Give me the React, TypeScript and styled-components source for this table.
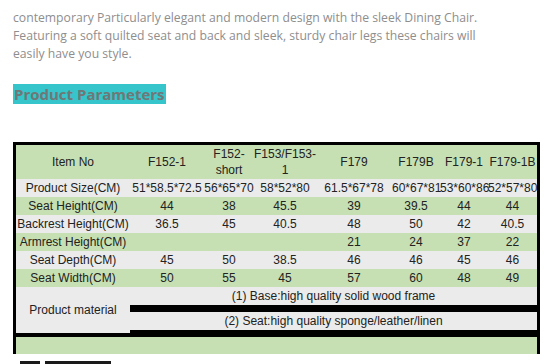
import styled, { createGlobalStyle } from "styled-components";

const GlobalStyle = createGlobalStyle`
  body {
    margin: 0;
    background: #ffffff;
  }
`;

const GREEN = "#c6e0b4";
const GREY = "#ebebeb";
const COLS = "114px 74px 50px 62px 76px 48px 48px 49px";

const Page = styled.div`
  padding: 9px 0 0 13px;
  width: 545px;
  box-sizing: border-box;
`;

const Intro = styled.p`
  margin: 0;
  font-family: "Open Sans", "DejaVu Sans", sans-serif;
  font-size: 12.2px;
  line-height: 18px;
  color: #8e8e8e;
`;

const SectionTitle = styled.h2`
  display: inline-block;
  margin: 21px 0 0;
  padding: 0 1px;
  height: 20px;
  line-height: 20px;
  background: #36c5ca;
  color: #6f7777;
  font-family: "Open Sans", "DejaVu Sans", sans-serif;
  font-size: 15px;
  font-weight: 700;
`;

const Table = styled.div`
  margin-top: 38px;
  width: 527px;
  box-sizing: border-box;
  border: 3px solid #000;
  border-bottom: none;
  font-family: "Liberation Sans", Arial, sans-serif;
  font-size: 12px;
  color: #222222;
`;

const Row = styled.div<{ $bg: string; $h: number }>`
  display: grid;
  grid-template-columns: ${COLS};
  height: ${(p) => p.$h}px;
  background: ${(p) => p.$bg};
`;

const Cell = styled.div`
  display: flex;
  align-items: center;
  justify-content: center;
  min-width: 0;
  white-space: nowrap;
`;

const CellText = styled.span`
  display: block;
  width: 100%;
  text-align: center;
  line-height: 16px;
`;

const Material = styled.div`
  display: grid;
  grid-template-columns: 114px 1fr;
  height: 50px;
`;

const MaterialLabel = styled.div`
  background: ${GREY};
  border-bottom: 4px solid #000;
  display: flex;
  align-items: center;
  justify-content: center;
`;

const MaterialList = styled.div`
  display: flex;
  flex-direction: column;
`;

const MaterialLine = styled.div`
  height: 18px;
  line-height: 18px;
  background: ${GREY};
  text-align: center;
  border-bottom: 7px solid #000;
`;

const BottomBand = styled.div`
  height: 17px;
  background: ${GREEN};
`;

const NextHeading = styled.div`
  margin: 7px 0 0 7px;
  display: flex;
  gap: 5px;
`;

const HeadingPiece = styled.div<{ $w: number }>`
  width: ${(p) => p.$w}px;
  height: 12px;
  background: #1a1a1a;
`;

const header = ["Item No", "F152-1", "F152-\nshort", "F153/F153-\n1", "F179", "F179B", "F179-1", "F179-1B"];

const rows: { label: string; values: string[] }[] = [
  { label: "Product Size(CM)", values: ["51*58.5*72.5", "56*65*70", "58*52*80", "61.5*67*78", "60*67*81", "53*60*86", "52*57*80"] },
  { label: "Seat Height(CM)", values: ["44", "38", "45.5", "39", "39.5", "44", "44"] },
  { label: "Backrest Height(CM)", values: ["36.5", "45", "40.5", "48", "50", "42", "40.5"] },
  { label: "Armrest Height(CM)", values: ["", "", "", "21", "24", "37", "22"] },
  { label: "Seat Depth(CM)", values: ["45", "50", "38.5", "46", "46", "45", "46"] },
  { label: "Seat Width(CM)", values: ["50", "55", "45", "57", "60", "48", "49"] },
];

export default function App() {
  return (
    <>
      <GlobalStyle />
      <Page>
        <Intro>
          contemporary Particularly elegant and modern design with the sleek Dining Chair.
          <br />
          Featuring a soft quilted seat and back and sleek, sturdy chair legs these chairs will
          <br />
          easily have you style.
        </Intro>
        <SectionTitle>Product Parameters</SectionTitle>
        <Table>
          <Row $bg={GREEN} $h={34}>
            {header.map((h) => (
              <Cell key={h}>
                <CellText>
                  {h.split("\n").map((part, i) => (
                    <span key={part}>
                      {i > 0 && <br />}
                      {part}
                    </span>
                  ))}
                </CellText>
              </Cell>
            ))}
          </Row>
          {rows.map((r, i) => (
            <Row key={r.label} $bg={i % 2 === 0 ? GREY : GREEN} $h={18}>
              <Cell>
                <CellText>{r.label}</CellText>
              </Cell>
              {r.values.map((v, j) => (
                <Cell key={j}>
                  <CellText>{v}</CellText>
                </Cell>
              ))}
            </Row>
          ))}
          <Material>
            <MaterialLabel>Product material</MaterialLabel>
            <MaterialList>
              <MaterialLine>(1) Base:high quality solid wood frame</MaterialLine>
              <MaterialLine>(2) Seat:high quality sponge/leather/linen</MaterialLine>
            </MaterialList>
          </Material>
          <BottomBand />
        </Table>
        <NextHeading>
          <HeadingPiece $w={20} />
          <HeadingPiece $w={66} />
        </NextHeading>
      </Page>
    </>
  );
}
